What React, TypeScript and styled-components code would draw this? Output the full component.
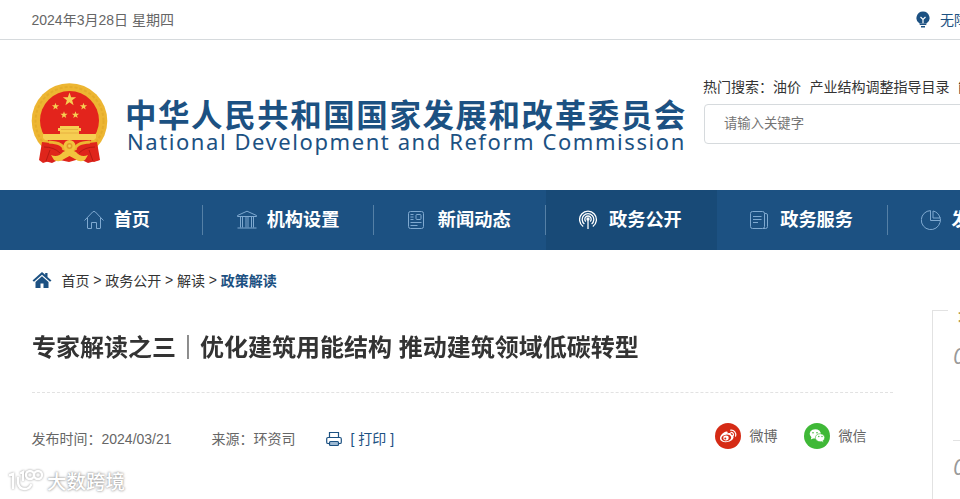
import React from "react";
import styled, { createGlobalStyle } from "styled-components";

const GlobalStyle = createGlobalStyle`
  * {
    box-sizing: border-box;
  }

  body {
    margin: 0;
    overflow: hidden;
    background: #fff;
    font-family: "Liberation Sans", "Noto Sans CJK SC", sans-serif;
    font-size: 14px;
    color: #333;
  }
`;

const Page = styled.div`
  width: 100%;
  height: 499px;
  overflow: hidden;
  white-space: nowrap;
`;

const TopBar = styled.div`
  display: flex;
  justify-content: space-between;
  height: 40px;
  padding-left: 31.5px;
  border-bottom: 1px solid #d6dadd;
  line-height: 40px;
  color: #666;
`;

const Access = styled.div`
  display: flex;
  align-items: center;
  gap: 10px;
  width: 44px;
  overflow: hidden;
  color: #1c5182;

  svg {
    flex: none;
  }
`;

const Header = styled.header`
  display: flex;
  height: 150px;
  padding-left: 31px;
`;

const Emblem = styled.svg`
  flex: none;
  width: 78px;
  height: 82px;
  margin-top: 42px;
`;

const Brand = styled.div`
  flex: none;
  width: 594px;
  padding: 56px 0 0 16px;
  color: #1c5182;
`;

const BrandName = styled.div`
  font: 700 31.5px/34px "Noto Sans CJK SC", sans-serif;
  letter-spacing: 1.55px;
`;

const BrandEnglish = styled.div`
  padding-left: 2px;
  font: 400 22px/22px "Noto Sans", sans-serif;
  letter-spacing: 1.57px;
`;

const Search = styled.div`
  flex: 1;
  min-width: 0;
  padding-top: 37px;
  overflow: hidden;
`;

const HotWords = styled.div`
  height: 27px;
  line-height: 20px;

  span {
    margin-right: 8.5px;
  }
`;

const SearchField = styled.div`
  width: 300px;
  height: 40px;
  margin-left: 1px;
  padding-left: 19px;
  border: 1px solid #d6dadd;
  border-radius: 4px;
  line-height: 37px;
  font-size: 13.33px;
  color: #757575;
`;

const Nav = styled.nav`
  display: flex;
  height: 60px;
  padding-left: 32px;
  overflow: hidden;
  background: #1c5182;
`;

const NavItem = styled.div<{ $active?: boolean }>`
  display: flex;
  flex: none;
  align-items: center;
  justify-content: center;
  gap: 10px;
  width: 171.2px;
  padding-right: 1.5px;
  color: #fff;
  font-size: 18.2px;
  font-weight: 700;
  line-height: 60px;
  background: ${({ $active }) =>
    $active ? "#184a77" : "linear-gradient(#5580a6, #5580a6) no-repeat right 50% / 1px 30px"};

  svg {
    flex: none;
    color: ${({ $active }) => ($active ? "#fff" : "#7fa9d0")};
  }
`;

const NavLabel = styled.span`
  height: 60px;
`;

const Main = styled.main`
  display: flex;
  height: 249px;
  padding-left: 31.5px;
`;

const Article = styled.article`
  flex: none;
  width: 860.5px;
`;

const Breadcrumb = styled.div`
  display: flex;
  align-items: center;
  height: 59px;

  svg {
    margin-right: 10px;
  }

  b {
    color: #1c5182;
  }
`;

const Separator = styled.span`
  margin: 0 3.8px;
`;

const Title = styled.h1`
  height: 84px;
  margin: 0;
  border-bottom: 1px dashed #e2e2e2;
  font-size: 24px;
  line-height: 78px;
  will-change: transform;
`;

const Meta = styled.div`
  display: flex;
  height: 92px;
  line-height: 92px;
  color: #666;
`;

const Source = styled.span`
  margin-left: 40px;
`;

const Print = styled.span`
  display: flex;
  align-items: center;
  gap: 9px;
  margin-left: 30px;
  color: #1c5182;
`;

const Share = styled.div`
  display: flex;
  align-items: center;
  gap: 9px;
  height: 86px;
  margin-left: auto;
  line-height: 86px;

  & + & {
    margin-left: 26px;
    margin-right: 25.5px;
  }
`;

const Sidebar = styled.aside`
  flex: none;
  width: 300px;
  height: 260px;
  margin: 60px 0 0 40px;
  border-left: 1px solid #e2e2e2;
  background: linear-gradient(#e2e2e2, #e2e2e2) no-repeat 0 0 / 15px 1px;
`;

const SidebarTitle = styled.div`
  height: 26px;
  margin: -8px 0 0 25px;
  color: #b69c52;
  font-size: 18px;
  font-weight: 700;
  line-height: 26px;
`;

const SidebarItem = styled.div`
  height: 110px;
  margin-left: 20px;
  padding-top: 8px;
  color: #999;
  font: italic 22px/34px "Open Sans", sans-serif;

  & + & {
    border-top: 1px solid #e2e2e2;
  }
`;

/* floats over the lower left corner of the page */
const Watermark = styled.div`
  position: absolute;
  left: 6px;
  top: 466px;
  display: flex;
  align-items: center;
  gap: 3px;
  height: 30px;
  color: #fff;
  font: 500 19.5px/30px "Noto Sans CJK SC", sans-serif;
  text-shadow: 0 0 2px #999, 0 0 3px #aaa;

  svg {
    filter: drop-shadow(0 0 1px #999);
  }
`;

const star = (x: number, y: number, r: number) =>
  Array.from({ length: 10 }, (_, i) => {
    const radius = i % 2 ? r * 0.4 : r;
    const angle = (Math.PI / 5) * i - Math.PI / 2;
    return `${x + radius * Math.cos(angle)},${y + radius * Math.sin(angle)}`;
  }).join(" ");

const NationalEmblem = () => (
  <Emblem viewBox="0 0 78 82">
    <path d="M12 63 10 78l11 3 8-4h20l8 4 11-3-2-15-28 9z" fill="#d9211c" />
    <circle cx="38.5" cy="39" r="37.8" fill="#edb632" />
    <circle cx="38.5" cy="39" r="34" fill="none" stroke="#e4ac2b" strokeWidth="2" strokeDasharray="3 2" />
    <circle cx="38.5" cy="38.5" r="29.5" fill="#e3241c" />
    <g fill="#f6cf52">
      <polygon points={star(38.5, 17.5, 7)} />
      <polygon points={star(24.5, 24.5, 3.8)} />
      <polygon points={star(52.5, 24.5, 3.8)} />
      <polygon points={star(33, 33, 3.8)} />
      <polygon points={star(44.5, 33, 3.8)} />
      <path d="M29 44h19v2h2v3h-2v4H29v-4h-2v-3h2z" />
      <path d="M12 52h53v4l-2 2H14l-2-2z" />
    </g>
    <path d="M30 47.5h17M29 51h19" stroke="#e8b040" />
    <path d="M11 60c12 1 17 3 21 8 3 2 10 2 13 0 4-5 9-7 21-8l3 18-6 2-11-4-14 4-14-3-12 4-4-3z" fill="#df251b" />
    <path d="M18 60q15 1 15 8M59 60q-15 1-15 8" stroke="#edb632" strokeWidth="3" fill="none" />
    <path d="M13 65q10 0 16 6M64 65q-10 0-16 6M19 68l-4 11M58 68l4 11" stroke="#b51a12" fill="none" />
    <g fill="#f2c43d">
      <circle cx="38.5" cy="64" r="6" />
      <path d="M20 73q7 3 12-3l6.500-3 6.500 3q5 6 12 3l-3 5q-5 3-10-1l-5.500-3-5.500 3q-5 4-10 1z" />
    </g>
    <circle cx="38.5" cy="64" r="3" fill="#e29b2a" />
    <circle cx="38.5" cy="64" r="1.4" fill="#f6cf52" />
  </Emblem>
);

const BulbIcon = () => (
  <svg width="14" height="17" viewBox="0 0 14 17">
    <path d="M7 .5a6.5 6.5 0 0 0-3.5 12h7A6.5 6.5 0 0 0 7 .5z" fill="#1c5182" />
    <path d="M4.5 6 7 8.5 9.5 6M7 8.5v4" fill="none" stroke="#fff" strokeWidth="1.2" />
    <path d="M3.7 13.3h6.6M5 15.7h4" stroke="#1c5182" strokeWidth="1.4" />
  </svg>
);

const NavIcon = ({ children }: { children: React.ReactNode }) => (
  <svg width="20" height="20" viewBox="0 0 20 20" fill="none" stroke="currentColor" strokeWidth="1">
    {children}
  </svg>
);

const navItems = [
  {
    label: "首页",
    icon: <path d="M.5 10.5 8.6 2Q10 .7 11.4 2l8.1 8.5M3.5 8v10q0 .5.5.5h3.5v-6h5v6H16q.5 0 .5-.5V8" />,
  },
  {
    label: "机构设置",
    icon: <path d="M.5 5.5 10 1.2l9.5 4.3v1H.5zM3.5 6.5v11M5.5 6.5v11M9 6.5v11M11 6.5v11M14.5 6.5v11M16.5 6.5v11M.5 18h19" />,
  },
  {
    label: "新闻动态",
    icon: (
      <>
        <rect x=".5" y="1.5" width="15" height="17" rx="2" />
        <rect x="8" y="4.5" width="5" height="5" rx="1" />
        <path d="M2.5 4.5h3M2.5 7h3M2.5 9.5h3M2.5 12.5h11M2.5 15.5h7" />
      </>
    ),
  },
  {
    label: "政务公开",
    active: true,
    icon: (
      <g strokeWidth="1.3">
        <path d="M4.2 16.5a8.4 8.4 0 1 1 9.6 0M5.4 14a5.8 5.8 0 1 1 7.2 0M6.8 11.5a3.2 3.2 0 1 1 4.4 0M9 9v10" />
        <circle cx="9" cy="9" r="1" fill="currentColor" />
      </g>
    ),
  },
  {
    label: "政务服务",
    icon: (
      <>
        <rect x=".5" y="1.5" width="14" height="17" rx="2" />
        <path d="M14.5 3.5h1.5q1.5 0 1.5 1.5v11.5q0 2-2 2H13M3 6.5h8.5M3 9.5h8.5M3 12.5h5" />
      </>
    ),
  },
  {
    label: "发展规划",
    icon: <path d="M9.5.6A9.5 9.5 0 1 0 19 12.5M9.5.5v10h10q0-2-.7-3.5M12 1v7h7M12 1q5 1 7 6.5M19 12.5l.5-2" />,
  },
];

const HomeIcon = () => (
  <svg width="20" height="18" viewBox="0 0 20 18" fill="#1c5182">
    <path d="M10 1 .5 9.5 2 10.8l8-7 8 7 1.5-1.3-4-3.6V2h-2.3v1.8z" />
    <path d="m10 5.2-6.5 5.7V17h5v-4.5h3V17h5v-6.1z" />
  </svg>
);

const PrinterIcon = () => (
  <svg width="16" height="16" viewBox="0 0 16 16" fill="none" stroke="#1c5182" strokeWidth="1.2">
    <path d="M3.5 6.5v-5h9v5M3.5 12.5H2q-1.3 0-1.3-1.3V8Q.7 6.5 2 6.5h12q1.3 0 1.3 1.5v3.2q0 1.3-1.3 1.3h-1.5" />
    <rect x="3.5" y="10.5" width="9" height="4" rx="1" fill="#9db9d2" />
  </svg>
);

const WeiboIcon = () => (
  <svg width="26" height="26" viewBox="0 0 26 26">
    <circle cx="13" cy="13" r="13" fill="#d52b15" />
    <path d="M11.5 8.5c1.2-.2 1.4.7 1 1.9 2-.8 4-.7 3.6 1.2 1.8.4 2.8 1.4 2.4 3-.7 3-4.6 4.9-8.4 4.6-3.4-.2-5.4-2-5.1-4.4.3-2.6 3.7-5.9 6.5-6.3z" fill="#fff" />
    <ellipse cx="11.3" cy="14.9" rx="4.9" ry="3.3" fill="#d52b15" transform="rotate(-8 11.3 14.9)" />
    <ellipse cx="11" cy="15" rx="2.7" ry="2.4" fill="#fff" />
    <circle cx="10.3" cy="15.6" r="1" fill="#d52b15" />
    <path d="M15.7 7.1a4.6 4.6 0 0 1 4.9 6M15.9 9.3a2.5 2.5 0 0 1 2.5 3" fill="none" stroke="#fff" strokeWidth="1.2" strokeLinecap="round" />
  </svg>
);

const WechatIcon = () => (
  <svg width="26" height="26" viewBox="0 0 26 26">
    <circle cx="13" cy="13" r="13" fill="#3fb837" />
    <path d="M6.8 16.5l.6-2.2A5.6 4.7 0 1 1 11 15.6l-1.9-.2z" fill="#fff" />
    <path d="m19.4 19.5-.4-1.7a4.7 4 0 1 0-2.6.9l1.1-.1z" fill="#fff" stroke="#3fb837" strokeWidth=".6" />
    <g fill="#3fb837">
      <circle cx="9" cy="9.8" r=".8" />
      <circle cx="13" cy="9.8" r=".8" />
      <circle cx="14.8" cy="13.5" r=".7" />
      <circle cx="18" cy="13.5" r=".7" />
    </g>
  </svg>
);

const App = () => (
  <Page>
    <GlobalStyle />
    <TopBar>
      <span>2024年3月28日 星期四</span>
      <Access>
        <BulbIcon />
        <span>无障碍</span>
      </Access>
    </TopBar>
    <Header>
      <NationalEmblem />
      <Brand>
        <BrandName>中华人民共和国国家发展和改革委员会</BrandName>
        <BrandEnglish>National Development and Reform Commission</BrandEnglish>
      </Brand>
      <Search>
        <HotWords>
          热门搜索：<span>油价</span>
          <span>产业结构调整指导目录</span>
          <span>能源</span>
        </HotWords>
        <SearchField>请输入关键字</SearchField>
      </Search>
    </Header>
    <Nav>
      {navItems.map(({ label, icon, active }) => (
        <NavItem key={label} $active={active}>
          <NavIcon>{icon}</NavIcon>
          <NavLabel>{label}</NavLabel>
        </NavItem>
      ))}
    </Nav>
    <Main>
      <Article>
        <Breadcrumb>
          <HomeIcon />
          首页<Separator>&gt;</Separator>
          政务公开<Separator>&gt;</Separator>
          解读<Separator>&gt;</Separator>
          <b>政策解读</b>
        </Breadcrumb>
        <Title>专家解读之三｜优化建筑用能结构 推动建筑领域低碳转型</Title>
        <Meta>
          <span>发布时间：2024/03/21</span>
          <Source>来源：环资司</Source>
          <Print>
            <PrinterIcon />[ 打印 ]
          </Print>
          <Share>
            <WeiboIcon />
            微博
          </Share>
          <Share>
            <WechatIcon />
            微信
          </Share>
        </Meta>
      </Article>
      <Sidebar>
        <SidebarTitle>最新</SidebarTitle>
        <SidebarItem style={{ height: 112, paddingTop: 10 }}>01</SidebarItem>
        <SidebarItem>02</SidebarItem>
      </Sidebar>
    </Main>
    <Watermark>
      <svg width="38" height="28" viewBox="0 0 38 28" fill="none" stroke="#fff" strokeWidth="2.4" strokeLinecap="round">
        <path d="M4 8l3-1v14M12 11v5q1 6 7 6 4 0 6-4" />
        <circle cx="24" cy="8" r="4" />
        <circle cx="32" cy="8" r="4" />
        <path d="M15 6l2-1v8" />
      </svg>
      大数跨境
    </Watermark>
  </Page>
);

export default App;
